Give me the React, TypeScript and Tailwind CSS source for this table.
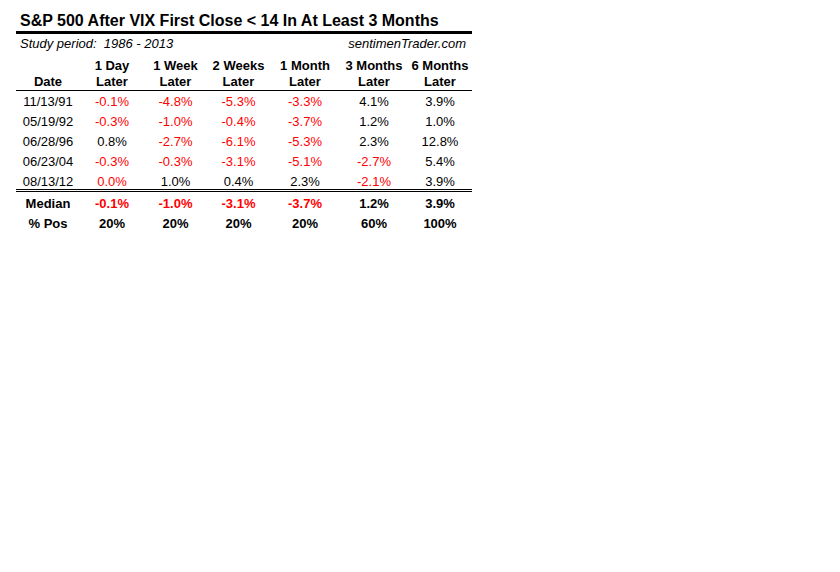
const headers: [string, string][] = [
  ["", "Date"],
  ["1 Day", "Later"],
  ["1 Week", "Later"],
  ["2 Weeks", "Later"],
  ["1 Month", "Later"],
  ["3 Months", "Later"],
  ["6 Months", "Later"],
];

const rows: string[][] = [
  ["11/13/91", "-0.1%", "-4.8%", "-5.3%", "-3.3%", "4.1%", "3.9%"],
  ["05/19/92", "-0.3%", "-1.0%", "-0.4%", "-3.7%", "1.2%", "1.0%"],
  ["06/28/96", "0.8%", "-2.7%", "-6.1%", "-5.3%", "2.3%", "12.8%"],
  ["06/23/04", "-0.3%", "-0.3%", "-3.1%", "-5.1%", "-2.7%", "5.4%"],
  ["08/13/12", "0.0%", "1.0%", "0.4%", "2.3%", "-2.1%", "3.9%"],
];

const summary: string[][] = [
  ["Median", "-0.1%", "-1.0%", "-3.1%", "-3.7%", "1.2%", "3.9%"],
  ["% Pos", "20%", "20%", "20%", "20%", "60%", "100%"],
];

// the 0.0% on 08/13/12 is shown red in the study sheet
const isRed = (v: string, r: number, c: number) =>
  c > 0 && (v.startsWith("-") || (r === 4 && c === 1));

const grid = "grid grid-cols-[64px_64px_63px_63px_70px_68px_64px]";

export default function App() {
  return (
    <div
      className="w-[840px] h-[572px] bg-white text-black text-[13px]"
      style={{ fontFamily: '"Liberation Sans", Arial, sans-serif' }}
    >
      <div className="ml-[16px] w-[456px] pt-[11px]">
        <div className="h-[20px] leading-[20px] pl-[4px] text-[16px] font-bold whitespace-nowrap">
          S&amp;P 500 After VIX First Close &lt; 14 In At Least 3 Months
        </div>
        <div className="h-[3px] bg-black" />

        {/* study period line */}
        <div className="flex justify-between h-[20px] leading-[20px] pl-[4px] pr-[6px] italic whitespace-pre">
          <span>Study period:  1986 - 2013</span>
          <span>sentimenTrader.com</span>
        </div>

        {/* column headers */}
        <div className={`${grid} pt-[4px] border-b border-black font-bold leading-[16px] text-center`}>
          {headers.map(([a, b], i) => (
            <div key={i} className="flex flex-col">
              <span className="h-[16px]">{a}</span>
              <span>{b}</span>
            </div>
          ))}
        </div>

        <div className="pt-[1px]">
          {rows.map((row, r) => (
            <div
              key={r}
              className={`${grid} text-center leading-[20px] ${r === rows.length - 1 ? "h-[17px]" : "h-[20px]"}`}
            >
              {row.map((v, c) => (
                <span key={c} className={isRed(v, r, c) ? "text-[#ff0000]" : ""}>
                  {v}
                </span>
              ))}
            </div>
          ))}
        </div>

        {/* double rule */}
        <div className="h-px bg-black" />
        <div className="h-px mt-[1px] bg-black" />

        <div className="pt-[2px] font-bold">
          {summary.map((row, r) => (
            <div key={r} className={`${grid} text-center h-[20px] leading-[20px]`}>
              {row.map((v, c) => (
                <span key={c} className={c > 0 && v.startsWith("-") ? "text-[#ff0000]" : ""}>
                  {v}
                </span>
              ))}
            </div>
          ))}
        </div>
      </div>
    </div>
  );
}
